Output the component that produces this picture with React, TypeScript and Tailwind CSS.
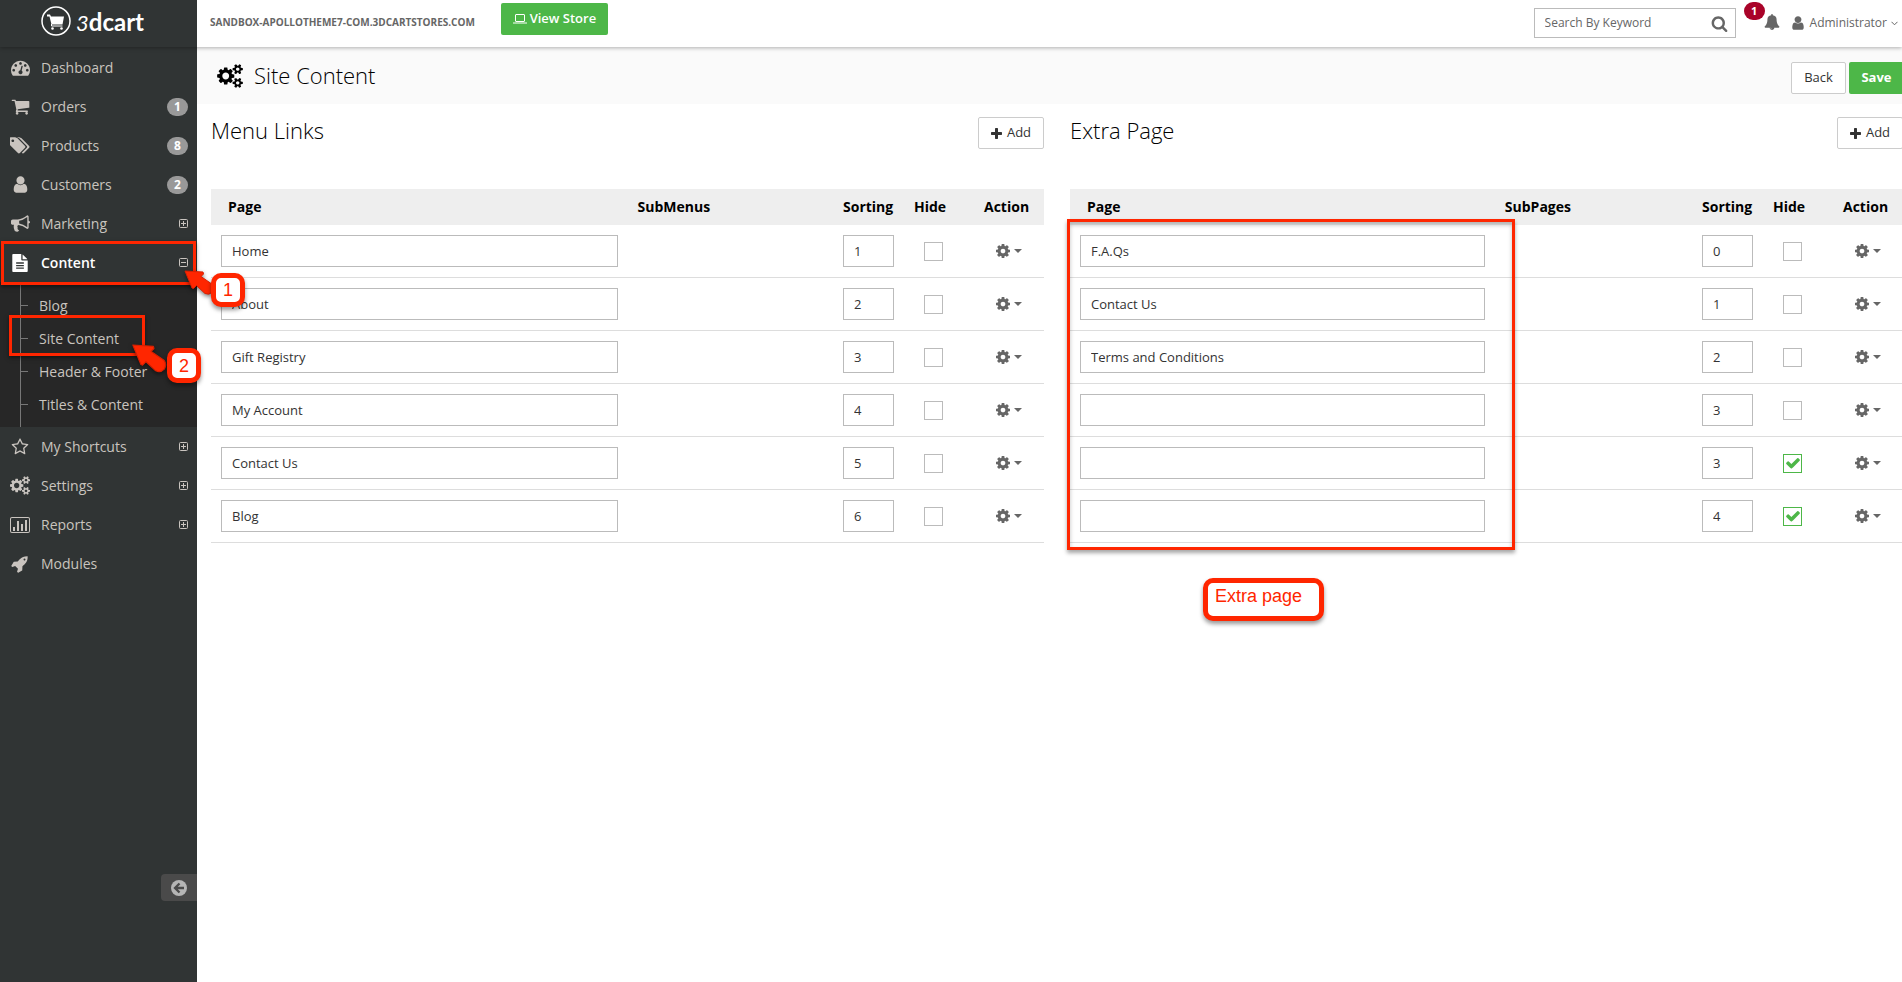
import { useState } from "react";
import type { ReactNode } from "react";

const icons = {
  dashboard: {
    viewBox: "0 0 1792 1792",
    d: "M384 1152q0-53-37.5-90.5t-90.5-37.5-90.5 37.5-37.5 90.5 37.5 90.5 90.5 37.5 90.5-37.5 37.5-90.5zm192-448q0-53-37.5-90.5t-90.5-37.5-90.5 37.5-37.5 90.5 37.5 90.5 90.5 37.5 90.5-37.5 37.5-90.5zm428 481l101-382q6-26-7.5-48.5t-38.5-29.5-48 6.5-30 39.5l-101 382q-60 5-107 43.5t-63 98.5q-20 77 20 146t117 89 146-20 89-117q16-60-6-117t-72-91zm660-33q0-53-37.5-90.5t-90.5-37.5-90.5 37.5-37.5 90.5 37.5 90.5 90.5 37.5 90.5-37.5 37.5-90.5zm-640-640q0-53-37.5-90.5t-90.5-37.5-90.5 37.5-37.5 90.5 37.5 90.5 90.5 37.5 90.5-37.5 37.5-90.5zm448 192q0-53-37.5-90.5t-90.5-37.5-90.5 37.5-37.5 90.5 37.5 90.5 90.5 37.5 90.5-37.5 37.5-90.5zm320 448q0 261-141 483-19 29-54 29h-1402q-35 0-54-29-141-221-141-483 0-182 71-348t191-286 286-191 348-71 348 71 286 191 191 286 71 348z",
  },
  cart: {
    viewBox: "0 0 1792 1792",
    d: "M704 1536q0 52-38 90t-90 38-90-38-38-90 38-90 90-38 90 38 38 90zm896 0q0 52-38 90t-90 38-90-38-38-90 38-90 90-38 90 38 38 90zm128-1088v512q0 24-16.5 42.5t-40.5 21.5l-1044 122q13 60 13 70 0 16-24 64h920q26 0 45 19t19 45-19 45-45 19h-1024q-26 0-45-19t-19-45q0-11 8-31.5t16-36 21.5-40 15.5-29.5l-177-823h-204q-26 0-45-19t-19-45 19-45 45-19h256q16 0 28.5 6.5t19.5 15.5 13 24.5 8 26 5.5 29.5 4.5 26h1201q26 0 45 19t19 45z",
  },
  tags: {
    viewBox: "0 0 1872 1792",
    d: "M384 448q0-53-37.5-90.5t-90.5-37.5-90.5 37.5-37.5 90.5 37.5 90.5 90.5 37.5 90.5-37.5 37.5-90.5zm1067 576q0 53-37 90l-491 492q-39 37-91 37-53 0-90-37l-715-716q-38-37-64.5-101t-26.5-117v-416q0-52 38-90t90-38h416q53 0 117 26.5t102 64.5l715 714q37 39 37 91zm384 0q0 53-37 90l-491 492q-39 37-91 37-36 0-59-14t-53-45l470-470q37-37 37-90 0-52-37-91l-715-714q-38-38-102-64.5t-117-26.5h224q53 0 117 26.5t102 64.5l715 714q37 39 37 91z",
  },
  user: {
    viewBox: "0 0 1792 1792",
    d: "M1536 1399q0 109-62.5 187t-150.5 78h-854q-88 0-150.5-78t-62.5-187q0-85 8.5-160.5t31.5-152 58.5-131 94-89 134.5-34.5q131 128 313 128t313-128q76 0 134.5 34.5t94 89 58.5 131 31.5 152 8.5 160.5zm-256-887q0 159-112.5 271.5t-271.5 112.5-271.5-112.5-112.5-271.5 112.5-271.5 271.5-112.5 271.5 112.5 112.5 271.5z",
  },
  bullhorn: {
    viewBox: "0 0 1792 1792",
    d: "M1664 640q53 0 90.5 37.5t37.5 90.5-37.5 90.5-90.5 37.5v384q0 52-38 90t-90 38q-417-347-812-380-58 19-91 66t-31 100.5 40 92.5q-20 33-23 65.5t6 58 33.5 55 48 50 61.5 50.5q-29 58-111.5 83t-168.5 11.5-132-55.5q-7-23-29.5-87.5t-32-94.5-23-89-15-101 3.5-98.5 22-110.5h-122q-66 0-113-47t-47-113v-192q0-66 47-113t113-47h480q435 0 896-384 52 0 90 38t38 90v384zm-128 604v-954q-394 302-768 343v270q377 42 768 341z",
  },
  file: {
    viewBox: "0 0 1792 1792",
    d: "M1596 476q14 14 28 36h-472v-472q22 14 36 28zm-476 164h544v1056q0 40-28 68t-68 28h-1344q-40 0-68-28t-28-68v-1600q0-40 28-68t68-28h800v544q0 40 28 68t68 28zm160 832v-128h-768v128h768zm0-256v-128h-768v128h768zm0-256v-128h-768v128h768z",
  },
  star: {
    viewBox: "0 0 1792 1792",
    d: "M1201 1004l306-297-422-62-189-382-189 382-422 62 306 297-73 421 378-199 377 199zm527-357q0 22-26 48l-363 354 86 500q1 7 1 20 0 50-41 50-19 0-40-12l-449-236-449 236q-22 12-40 12-21 0-31.5-14.5t-10.5-35.5q0-6 2-20l86-500-364-354q-25-27-25-48 0-37 56-46l502-73 225-455q19-41 49-41t49 41l225 455 502 73q56 9 56 46z",
  },
  cogs: {
    viewBox: "0 0 1920 1792",
    d: "M896 896q0-106-75-181t-181-75-181 75-75 181 75 181 181 75 181-75 75-181zm768 512q0-52-38-90t-90-38-90 38-38 90q0 53 37.5 90.5t90.5 37.5 90.5-37.5 37.5-90.5zm0-1024q0-52-38-90t-90-38-90 38-38 90q0 53 37.5 90.5t90.5 37.5 90.5-37.5 37.5-90.5zm-384 421v185q0 10-7 19.5t-16 10.5l-155 24q-11 35-32 76 34 48 90 115 7 11 7 20 0 12-7 19-23 30-82.5 89.5t-78.5 59.5q-11 0-21-7l-115-90q-37 19-77 31-11 108-23 155-7 24-30 24h-186q-11 0-20-7.5t-10-17.5l-23-153q-34-10-75-31l-118 89q-7 7-20 7-11 0-21-8-144-133-144-160 0-9 7-19 10-14 41-53t47-61q-23-44-35-82l-152-24q-10-1-17-9.5t-7-19.5v-185q0-10 7-19.5t16-10.5l155-24q11-35 32-76-34-48-90-115-7-11-7-20 0-12 7-20 22-30 82-89t79-59q11 0 21 7l115 90q34-18 77-32 11-108 23-154 7-24 30-24h186q11 0 20 7.5t10 17.5l23 153q34 10 75 31l118-89q8-7 20-7 11 0 21 8 144 133 144 160 0 8-7 19-12 16-42 54t-45 60q23 48 34 82l152 23q10 2 17 10.5t7 19.5zm640 533v140q0 16-149 31-12 27-30 52 51 113 51 138 0 4-4 7-122 71-124 71-8 0-46-47t-52-68q-20 2-30 2t-30-2q-14 21-52 68t-46 47q-2 0-124-71-4-3-4-7 0-25 51-138-18-25-30-52-149-15-149-31v-140q0-16 149-31 13-29 30-52-51-113-51-138 0-4 4-7 4-2 35-20t59-34 30-16q8 0 46 46.5t52 67.5q20-2 30-2t30 2q51-71 92-112l6-2q4 0 124 70 4 3 4 7 0 25-51 138 17 23 30 52 149 15 149 31zm0-1024v140q0 16-149 31-12 27-30 52 51 113 51 138 0 4-4 7-122 71-124 71-8 0-46-47t-52-68q-20 2-30 2t-30-2q-14 21-52 68t-46 47q-2 0-124-71-4-3-4-7 0-25 51-138-18-25-30-52-149-15-149-31v-140q0-16 149-31 13-29 30-52-51-113-51-138 0-4 4-7 4-2 35-20t59-34 30-16q8 0 46 46.5t52 67.5q20-2 30-2t30 2q51-71 92-112l6-2q4 0 124 70 4 3 4 7 0 25-51 138 17 23 30 52 149 15 149 31z",
  },
  chart: {
    viewBox: "0 0 20 16",
    d: "M2 0h16a2 2 0 0 1 2 2v12a2 2 0 0 1-2 2H2a2 2 0 0 1-2-2V2a2 2 0 0 1 2-2zm0 1a1 1 0 0 0-1 1v12a1 1 0 0 0 1 1h16a1 1 0 0 0 1-1V2a1 1 0 0 0-1-1zM3 10h2v4H3zM7 4h2v10H7zM11 7h2v7h-2zM15 3h2v11h-2z",
  },
  rocket: {
    viewBox: "0 0 1792 1792",
    d: "M1440 448q0-40-28-68t-68-28-68 28-28 68 28 68 68 28 68-28 28-68zm224-288q0 249-75.5 430.5t-253.5 360.5q-81 80-195 176l-20 379q-2 16-16 26l-384 224q-7 4-16 4-12 0-23-9l-64-64q-13-14-8-32l85-276-281-281-276 85q-3 1-9 1-14 0-23-9l-64-64q-17-19-5-39l224-384q10-14 26-16l379-20q96-114 176-195 188-187 358-258t431-71q14 0 24 9.5t10 22.5z",
  },
  bell: {
    viewBox: "0 0 1792 1792",
    d: "M912 1696q0-16-16-16-59 0-101.5-42.5t-42.5-101.5q0-16-16-16t-16 16q0 73 51.5 124.5t124.5 51.5q16 0 16-16zm816-288q0 52-38 90t-90 38h-448q0 106-75 181t-181 75-181-75-75-181h-448q-52 0-90-38t-38-90q50-42 91-88t85-119.5 74.5-158.5 50-206 19.5-260q0-152 117-282.5t307-158.5q-8-19-8-39 0-40 28-68t68-28 68 28 28 68q0 20-8 39 190 28 307 158.5t117 282.5q0 139 19.5 260t50 206 74.5 158.5 85 119.5 91 88z",
  },
  search: {
    viewBox: "0 0 1792 1792",
    d: "M1216 832q0-185-131.5-316.5t-316.5-131.5-316.5 131.5-131.5 316.5 131.5 316.5 316.5 131.5 316.5-131.5 131.5-316.5zm512 832q0 52-38 90t-90 38q-54 0-90-38l-343-342q-179 124-399 124-143 0-273.5-55.5t-225-150-150-225-55.5-273.5 55.5-273.5 150-225 225-150 273.5-55.5 273.5 55.5 225 150 150 225 55.5 273.5q0 220-124 399l343 343q37 37 37 90z",
  },
  check: {
    viewBox: "0 0 1792 1792",
    d: "M1671 566q0 40-28 68l-724 724-136 136q-28 28-68 28t-68-28l-136-136-362-362q-28-28-28-68t28-68l136-136q28-28 68-28t68 28l294 295 656-657q28-28 68-28t68 28l136 136q28 28 28 68z",
  },
  plus: {
    viewBox: "192 128 1408 1408",
    d: "M1600 736v192q0 40-28 68t-68 28h-416v416q0 40-28 68t-68 28h-192q-40 0-68-28t-28-68v-416h-416q-40 0-68-28t-28-68v-192q0-40 28-68t68-28h416v-416q0-40 28-68t68-28h192q40 0 68 28t28 68v416h416q40 0 68 28t28 68z",
  },
  cog: {
    viewBox: "128 128 1536 1536",
    d: "M1152 896q0-106-75-181t-181-75-181 75-75 181 75 181 181 75 181-75 75-181zm512-109v222q0 12-8 23t-20 13l-185 28q-19 54-39 91 35 50 107 138 10 12 10 25t-9 23q-27 37-99 108t-94 71q-12 0-26-9l-138-108q-44 23-91 38-16 136-29 186-7 28-36 28h-222q-14 0-24.5-8.5t-11.5-21.5l-28-184q-49-16-90-37l-141 107q-10 9-25 9-14 0-25-11-126-114-165-168-7-10-7-23 0-12 8-23 15-21 51-66.5t54-70.5q-27-50-41-99l-183-27q-13-2-21-12.5t-8-23.5v-222q0-12 8-23t19-13l186-28q14-46 39-92-40-57-107-138-10-12-10-24 0-10 9-23 26-36 98.5-107.5t94.5-71.5q13 0 26 10l138 107q44-23 91-38 16-136 29-186 7-28 36-28h222q14 0 24.5 8.5t11.5 21.5l28 184q49 16 90 37l142-107q9-9 24-9 13 0 25 10 129 119 165 170 7 8 7 22 0 12-8 23-15 21-51 66.5t-54 70.5q26 50 41 98l183 28q13 2 21 12.5t8 23.5z",
  },
};

type IconName = keyof typeof icons;

function Icon({ name, className }: { name: IconName; className?: string }) {
  const icon = icons[name];
  return (
    <svg viewBox={icon.viewBox} className={className} fill="currentColor" fillRule={name === "chart" ? "evenodd" : "nonzero"} aria-hidden="true">
      <path d={icon.d} />
    </svg>
  );
}

function ToggleBox({ open }: { open?: boolean }) {
  return (
    <svg viewBox="0 0 9 9" className="h-[9px] w-[9px]" fill="none" stroke="currentColor" aria-hidden="true">
      <rect x="0.5" y="0.5" width="8" height="8" rx="1" />
      <path d={open ? "M2 4.5h5" : "M2 4.5h5M4.5 2v5"} />
    </svg>
  );
}

type MenuItem = { label: string; icon: IconName; iconClass: string; badge?: number; expandable?: boolean };

const topMenu: MenuItem[] = [
  { label: "Dashboard", icon: "dashboard", iconClass: "h-[19px] w-[19px]" },
  { label: "Orders", icon: "cart", iconClass: "h-[19px] w-[19px]", badge: 1 },
  { label: "Products", icon: "tags", iconClass: "h-[19px] w-5", badge: 8 },
  { label: "Customers", icon: "user", iconClass: "h-[19px] w-[19px]", badge: 2 },
  { label: "Marketing", icon: "bullhorn", iconClass: "h-[19px] w-[19px]", expandable: true },
];

const bottomMenu: MenuItem[] = [
  { label: "My Shortcuts", icon: "star", iconClass: "h-[18px] w-[18px]", expandable: true },
  { label: "Settings", icon: "cogs", iconClass: "h-[19px] w-5", expandable: true },
  { label: "Reports", icon: "chart", iconClass: "h-4 w-5", expandable: true },
  { label: "Modules", icon: "rocket", iconClass: "h-[18px] w-[18px]" },
];

const subMenu = ["Blog", "Site Content", "Header & Footer", "Titles & Content"];

function MenuRow({ item }: { item: MenuItem }) {
  return (
    <a href="#" className="flex h-[39px] items-center pr-[9px] pl-[10px] text-sm text-[#c9c4bf]">
      <span className="flex w-5 justify-center">
        <Icon name={item.icon} className={item.iconClass} />
      </span>
      <span className="ml-[11px] flex-1">{item.label}</span>
      {item.badge && (
        <span className="flex h-[18px] w-[21px] items-center justify-center rounded-full bg-[#999] text-xs font-bold text-white">
          {item.badge}
        </span>
      )}
      {item.expandable && <ToggleBox />}
    </a>
  );
}

function Callout({ label, className }: { label: string; className: string }) {
  return (
    <span
      className={`absolute z-20 flex items-center justify-center rounded-[10px] border-5 border-[#ff2600] bg-white font-['Liberation_Sans',sans-serif] text-lg font-normal text-[#ff2600] shadow-[0_3px_4px_rgba(0,0,0,0.4)] ${className}`}
    >
      {label}
    </span>
  );
}

function Arrow({ className }: { className: string }) {
  return (
    <svg viewBox="0 0 32 28" className={`absolute z-20 drop-shadow-[0_2px_2px_rgba(0,0,0,0.5)] ${className}`} aria-hidden="true">
      <path
        d="M1 1 19 2 19.500 4 17 6.500 28.500 14.500Q31 18 28.500 22 25 25.500 21 23.500L12.500 15.500 9.500 18.500 8 18Z"
        fill="#ff2600"
        stroke="#d92000"
        strokeLinejoin="round"
      />
    </svg>
  );
}

function Sidebar() {
  return (
    <nav className="flex w-[197px] shrink-0 flex-col bg-[#303434] pt-px">
      {topMenu.map((item) => (
        <MenuRow key={item.label} item={item} />
      ))}

      {/* Expanded section */}
      <div className="relative">
        <a href="#" className="flex h-[39px] items-center pr-[9px] pl-[10px] text-sm font-semibold text-white">
          <span className="flex w-5 justify-center">
            <Icon name="file" className="h-[18px] w-[18px]" />
          </span>
          <span className="ml-[11px] flex-1">Content</span>
          <span className="text-[#c9c4bf]">
            <ToggleBox open />
          </span>
        </a>
        <span className="absolute -top-0.5 left-px z-10 h-11 w-[195px] border-3 border-[#ff2600] shadow-[0_2px_4px_rgba(0,0,0,0.5)]" />
        <Arrow className="top-[27px] left-[184px] h-7 w-8" />
        <Callout label="1" className="top-[30px] left-[211px] h-[34px] w-[34px]" />
      </div>
      <div className="relative bg-[#272727] pl-5">
        <ul className="border-l border-[#777] pt-[7px] pb-[6px]">
          {subMenu.map((label) => (
            <li key={label} className="flex h-[33px] items-center">
              <span className="h-px w-[7px] bg-[#777]" />
              <a href="#" className="ml-[11px] text-sm text-[#c9c4bf]">
                {label}
              </a>
            </li>
          ))}
        </ul>
        <span className="absolute top-[33px] left-[9px] z-10 h-[41px] w-[136px] border-3 border-[#ff2600] shadow-[0_2px_4px_rgba(0,0,0,0.5)]" />
        <Arrow className="top-[62px] left-[131px] h-8 w-[38px]" />
        <Callout label="2" className="top-[66px] left-[167px] h-[35px] w-[34px]" />
      </div>

      {bottomMenu.map((item) => (
        <MenuRow key={item.label} item={item} />
      ))}

      <button aria-label="Collapse menu" className="mt-auto mb-[81px] flex h-[27px] w-9 items-center self-end rounded-l bg-[#4a4a4a] pl-[10px]">
        <svg viewBox="0 0 16 16" className="h-4 w-4" aria-hidden="true">
          <circle cx="8" cy="8" r="8" fill="#b5b5b5" />
          <path d="M8.500 3.500 4 8l4.500 4.500M4.500 8H13" fill="none" stroke="#4a4a4a" strokeWidth="2.300" />
        </svg>
      </button>
    </nav>
  );
}

function Header() {
  return (
    <header className="relative z-10 flex h-[47px] shadow-[0_1px_4px_rgba(0,0,0,0.3)]">
      <a href="#" aria-label="3dcart" className="flex w-[197px] shrink-0 items-start bg-[#303434] pt-[6px] pl-[41px] text-white">
        <svg viewBox="0 0 30 30" className="h-[30px] w-[30px]" aria-hidden="true">
          <circle cx="15" cy="15" r="14" fill="none" stroke="currentColor" strokeWidth="1.500" />
          <path d="M6 8.500h3l1 2h13l-1.500 8H10.500L8.500 10.500H6z" fill="currentColor" />
          <path d="M10.500 18v2h11" fill="none" stroke="currentColor" />
          <circle cx="11.500" cy="22.500" r="1.300" fill="currentColor" />
          <circle cx="20.500" cy="22.500" r="1.300" fill="currentColor" />
        </svg>
        <span className="ml-[5px] flex items-baseline font-['Lato',sans-serif] leading-[28px]">
          <span className="text-[22px] italic">3</span>
          <span className="text-2xl font-bold">dcart</span>
        </span>
      </a>
      <div className="flex flex-1 items-start bg-white pr-1 pl-[13px] text-[#666]">
        <span className="mt-[14px] text-[10px] leading-4 font-bold">SANDBOX-APOLLOTHEME7-COM.3DCARTSTORES.COM</span>
        <button className="mt-[3px] ml-[26px] flex h-8 w-[107px] items-center justify-center gap-[3px] rounded-xs bg-[#4db748] text-[13px] font-semibold text-white">
          <svg viewBox="0 0 14 10" className="h-[10px] w-[14px]" fill="none" stroke="currentColor" aria-hidden="true">
            <rect x="2.500" y="0.500" width="9" height="7" rx="0.500" />
            <path d="M0 9h14" />
          </svg>
          View Store
        </button>
        <form className="mt-2 ml-auto flex h-[30px] w-[202px] items-center border border-[#bbb] px-[10px] pr-[7px]">
          <input
            aria-label="Search By Keyword"
            placeholder="Search By Keyword"
            className="min-w-0 flex-1 text-xs outline-none placeholder:text-[#666]"
          />
          <button type="button" aria-label="Search">
            <Icon name="search" className="h-[17px] w-[17px]" />
          </button>
        </form>
        <button aria-label="Notifications" className="relative mt-[14px] ml-7">
          <Icon name="bell" className="h-4 w-4" />
          <span className="absolute -top-3 -left-5 flex h-[18px] w-[21px] items-center justify-center rounded-full bg-[#a90329] text-[11px] font-bold text-white">
            1
          </span>
        </button>
        <button className="mt-[14px] ml-[10px] flex h-[18px] items-center text-xs">
          <Icon name="user" className="h-4 w-4" />
          <span className="ml-1">Administrator</span>
          <svg viewBox="0 0 7 5" className="ml-1 h-[5px] w-[7px]" fill="none" stroke="currentColor" aria-hidden="true">
            <path d="M0.500 0.800 3.500 3.800 6.500 0.800" />
          </svg>
        </button>
      </div>
    </header>
  );
}

type Row = { page: string; sort: string; hide: boolean };

const menuLinks: Row[] = [
  { page: "Home", sort: "1", hide: false },
  { page: "About", sort: "2", hide: false },
  { page: "Gift Registry", sort: "3", hide: false },
  { page: "My Account", sort: "4", hide: false },
  { page: "Contact Us", sort: "5", hide: false },
  { page: "Blog", sort: "6", hide: false },
];

const extraPages: Row[] = [
  { page: "F.A.Qs", sort: "0", hide: false },
  { page: "Contact Us", sort: "1", hide: false },
  { page: "Terms and Conditions", sort: "2", hide: false },
  { page: "", sort: "3", hide: false },
  { page: "", sort: "3", hide: true },
  { page: "", sort: "4", hide: true },
];

const inputClass = "block h-8 w-full border border-[#bbb] bg-white px-[10px] text-[13px] text-[#333] outline-none";

type PanelProps = { title: string; subTitle: string; pageWidth: string; initialRows: Row[]; children?: ReactNode };

function LinksPanel({ title, subTitle, pageWidth, initialRows, children }: PanelProps) {
  const [rows, setRows] = useState(initialRows);

  const update = (index: number, patch: Partial<Row>) =>
    setRows(rows.map((row, i) => (i === index ? { ...row, ...patch } : row)));

  return (
    <section className="min-w-0">
      <div className="flex h-[72px] items-start justify-between">
        <h2 className="text-[22px] leading-[26px] font-light text-black">{title}</h2>
        <button
          onClick={() => setRows([...rows, { page: "", sort: String(rows.length), hide: false }])}
          className="flex h-8 w-[66px] items-center justify-center gap-[5px] rounded-xs border border-[#ccc] bg-white text-[13px] text-[#333]"
        >
          <Icon name="plus" className="h-[11px] w-[11px]" />
          Add
        </button>
      </div>
      <div className="relative">
        <table className="w-full table-fixed border-separate border-spacing-0 text-sm">
          <thead>
            <tr className="h-9 bg-[#eee] text-left text-black">
              <th className={`pl-[17px] ${pageWidth}`}>Page</th>
              <th className="pl-[10px]">{subTitle}</th>
              <th className="w-[71px] pl-[10px]">Sorting</th>
              <th className="w-[52px] pl-[10px]">Hide</th>
              <th className="w-[88px] pl-[28px]">Action</th>
            </tr>
          </thead>
          <tbody>
            {rows.map((row, index) => (
              <tr key={index} className="h-[53px] *:border-b *:border-[#ddd]">
                <td className="px-[10px]">
                  <input aria-label="Page" className={inputClass} value={row.page} onChange={(e) => update(index, { page: e.target.value })} />
                </td>
                <td />
                <td className="px-[10px]">
                  <input aria-label="Sorting" className={inputClass} value={row.sort} onChange={(e) => update(index, { sort: e.target.value })} />
                </td>
                <td className="pl-5">
                  <label className="relative block h-[19px] w-[19px]">
                    <input
                      type="checkbox"
                      aria-label="Hide"
                      checked={row.hide}
                      onChange={(e) => update(index, { hide: e.target.checked })}
                      className="block h-[19px] w-[19px] appearance-none border border-[#bbb] checked:border-[#4db748]"
                    />
                    {row.hide && <Icon name="check" className="pointer-events-none absolute top-px left-[2px] h-4 w-4 text-[#4db748]" />}
                  </label>
                </td>
                <td className="pl-10">
                  <button aria-label="Row actions" className="flex items-center gap-1 text-[#666]">
                    <Icon name="cog" className="h-[14px] w-[14px]" />
                    <span className="border-x-4 border-t-4 border-x-transparent border-t-[#666]" />
                  </button>
                </td>
              </tr>
            ))}
          </tbody>
        </table>
        {children}
      </div>
    </section>
  );
}

export default function App() {
  return (
    <div className="flex min-h-screen flex-col overflow-x-hidden bg-white font-['Open_Sans',sans-serif]">
      <Header />
      <div className="flex flex-1">
        <Sidebar />
        <main className="min-w-0 flex-1">
          <div className="flex h-[57px] items-center bg-[#fafafa] pl-5">
            <Icon name="cogs" className="h-6 w-[26px] text-black" />
            <h1 className="ml-[11px] flex-1 text-[22px] font-light text-black">Site Content</h1>
            <button className="mt-1 h-8 w-[55px] rounded-xs border border-[#ccc] bg-white text-[13px] text-[#333]">Back</button>
            <button className="mt-1 -mr-0.5 ml-[3px] h-8 w-[55px] rounded-l-xs bg-[#4db748] text-[13px] font-bold text-white">Save</button>
          </div>
          <div className="-mr-px grid grid-cols-2 gap-[26px] pt-[13px] pl-[14px]">
            <LinksPanel title="Menu Links" subTitle="SubMenus" pageWidth="w-[50%]" initialRows={menuLinks} />
            <LinksPanel title="Extra Page" subTitle="SubPages" pageWidth="w-[51%]" initialRows={extraPages}>
              <span className="pointer-events-none absolute top-[30px] -bottom-[7px] -left-[3px] w-[448px] border-3 border-[#ff2600] shadow-[0_3px_4px_rgba(0,0,0,0.35),inset_0_3px_4px_rgba(0,0,0,0.25)]" />
              <span className="absolute top-[389px] left-[133px] h-[43px] w-[121px] rounded-[10px] border-5 border-[#ff2600] bg-white pl-[7px] font-['Liberation_Sans',sans-serif] text-lg leading-[26px] text-[#ff2600] shadow-[0_3px_4px_rgba(0,0,0,0.4)]">
                Extra page
              </span>
            </LinksPanel>
          </div>
        </main>
      </div>
    </div>
  );
}
